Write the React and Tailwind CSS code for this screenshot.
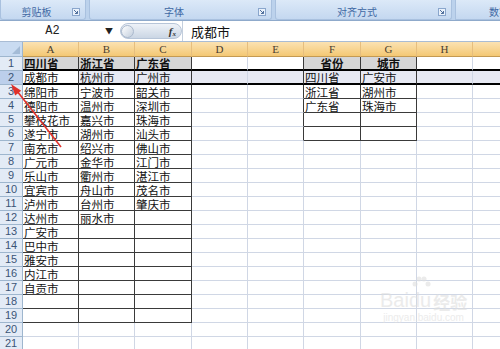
import React from 'react';

const COLS = [
  { key: 'A', w: 'w-[56px]' },
  { key: 'B', w: 'w-[56px]' },
  { key: 'C', w: 'w-[57px]' },
  { key: 'D', w: 'w-[56px]' },
  { key: 'E', w: 'w-[56px]' },
  { key: 'F', w: 'w-[57px]' },
  { key: 'G', w: 'w-[56px]' },
  { key: 'H', w: 'w-[56px]' },
  { key: '', w: 'w-[40px]' },
];

const colA = ['四川省', '成都市', '绵阳市', '德阳市', '攀枝花市', '遂宁市', '南充市', '广元市', '乐山市', '宜宾市', '泸州市', '达州市', '广安市', '巴中市', '雅安市', '内江市', '自贡市'];
const colB = ['浙江省', '杭州市', '宁波市', '温州市', '嘉兴市', '湖州市', '绍兴市', '金华市', '衢州市', '舟山市', '台州市', '丽水市'];
const colC = ['广东省', '广州市', '韶关市', '深圳市', '珠海市', '汕头市', '佛山市', '江门市', '湛江市', '茂名市', '肇庆市'];
const colF = ['省份', '四川省', '浙江省', '广东省'];
const colG = ['城市', '广安市', '湖州市', '珠海市'];

const ROWS = Array.from({ length: 21 }, (_, i) => [
  colA[i] || '',
  colB[i] || '',
  colC[i] || '',
  '',
  '',
  colF[i] || '',
  colG[i] || '',
  '',
  '',
]);

// bordered ranges: A1:C19 and F1:G6
const inTable = (r, c) => (c <= 2 && r <= 19) || ((c === 5 || c === 6) && r <= 6);

function Launcher() {
  return (
    <svg width="8" height="8" viewBox="0 0 8 8" className="mr-[5px] shrink-0">
      <rect x="0.5" y="0.5" width="7" height="7" fill="#e9f1fb" stroke="#8aa6cc" />
      <path d="M2 2 L5.5 5.5 M5.5 3 V5.5 H3" stroke="#4f6f9c" strokeWidth="1" fill="none" />
    </svg>
  );
}

function Group({ w, label }) {
  return (
    <div className={`${w} shrink-0 flex items-center pt-[4px] h-[20px] bg-gradient-to-b from-[#dce9f8] to-[#c4d8f0] border-x border-b border-[#a9c1df] rounded-b-[3px]`}>
      <span className="flex-1 text-center text-[10px] leading-none text-[#3f68a3]">{label}</span>
      <Launcher />
    </div>
  );
}

function Cell({ r, c, value, col }) {
  const dark = inTable(r, c);
  const rightDark = dark || inTable(r, c + 1);
  const bottomDark = dark || inTable(r + 1, c);
  const thick = r === 1 || r === 2;
  let bg = 'bg-white';
  if (r === 1 && dark) bg = 'bg-[#d6d6d6]';
  else if (r === 2 && c !== 0) bg = 'bg-[#e7e9f3]';
  const center = r === 1 && (c === 5 || c === 6);
  return (
    <div
      className={`${col.w} shrink-0 h-[14px] flex items-center whitespace-nowrap border-r ${
        rightDark ? 'border-r-[#3a3a3a]' : 'border-r-[#d0d7e5]'
      } ${thick ? 'border-b-2 border-b-black' : bottomDark ? 'border-b border-b-[#3a3a3a]' : 'border-b border-b-[#d0d7e5]'} ${bg} ${
        center ? 'justify-center' : 'pl-[1px]'
      } ${r === 1 ? 'font-bold' : ''} text-[11.5px] leading-[12px] text-[#111]`}
    >
      {value}
    </div>
  );
}

export default function App() {
  return (
    <div className="relative w-[500px] h-[349px] overflow-hidden bg-white font-['Noto_Sans_CJK_SC','Liberation_Sans',sans-serif]">
      {/* ribbon group labels */}
      <div className="flex h-[21px] gap-[3px] bg-[#bcd2ec] border-b border-[#8faacb]">
        <Group w="w-[86px]" label="剪贴板" />
        <Group w="w-[183px]" label="字体" />
        <Group w="w-[177px]" label="对齐方式" />
        <div className="flex-1 flex items-center pt-[4px] h-[20px] bg-gradient-to-b from-[#dce9f8] to-[#c4d8f0] border-l border-b border-[#a9c1df] pl-[33px] overflow-hidden">
          <span className="text-[10px] leading-none text-[#3f68a3] whitespace-nowrap">数字</span>
        </div>
      </div>

      {/* formula bar */}
      <div className="flex items-center h-[20px] bg-white">
        <div className="w-[120px] flex items-center shrink-0">
          <span className="w-[105px] text-center text-[12px] leading-none text-[#222] font-['Liberation_Mono',monospace]">A2</span>
          <span className="text-[8px] text-[#222]">▼</span>
        </div>
        <div className="w-[62px] h-[16px] shrink-0 flex items-center justify-between rounded-full bg-gradient-to-b from-[#eef2f8] to-[#cbd6e4] border border-[#b7c5d8] pr-[5px]">
          <span className="w-[13px] h-[13px] rounded-full bg-gradient-to-br from-white to-[#c2cedd] border border-[#aab9cd]" />
          <span className="font-['Liberation_Serif',serif] italic font-bold text-[11px] leading-none text-[#333]">
            f<sub className="text-[7px]">x</sub>
          </span>
        </div>
        <div className="flex-1 h-[20px] flex items-center pl-[8px] border-l border-[#c4cfdd] text-[13px] leading-none text-[#111]">成都市</div>
      </div>
      <div className="h-[1px] bg-[#a9bcd4]" />

      {/* column headers */}
      <div className="flex h-[15px]">
        <div className="w-[23px] shrink-0 h-[15px] bg-[#c9dbf1] border-r border-b border-[#9eb6ce] flex items-end justify-end p-[2px]">
          <svg width="8" height="8" viewBox="0 0 8 8">
            <path d="M8 0 V8 H0 Z" fill="#a4bbd6" />
          </svg>
        </div>
        {COLS.map((col) => (
          <div
            key={col.key + col.w}
            className={`${col.w} shrink-0 h-[15px] flex items-center justify-center bg-gradient-to-b from-[#fbe2b2] to-[#f4c873] border-r border-r-[#e6be7e] border-b border-b-[#c49a52] font-['Liberation_Serif',serif] text-[11px] leading-none text-[#4a4030]`}
          >
            {col.key}
          </div>
        ))}
      </div>

      {/* rows */}
      {ROWS.map((row, i) => {
        const r = i + 1;
        return (
          <div key={r} className="flex h-[14px]">
            <div
              className={`w-[23px] shrink-0 h-[14px] flex items-center justify-center border-r border-b border-[#9eb6ce] text-[11px] leading-none text-[#3b5576] font-['Liberation_Sans',sans-serif] ${
                r === 2 ? 'bg-[#bccfeb]' : 'bg-[#e3ebf6]'
              }`}
            >
              {r}
            </div>
            {row.map((v, c) => (
              <Cell key={c} r={r} c={c} value={v} col={COLS[c]} />
            ))}
          </div>
        );
      })}

      {/* red annotation arrow */}
      <svg className="absolute left-0 top-0 pointer-events-none" width="500" height="349">
        <line x1="17" y1="91" x2="61" y2="147" stroke="#e0322c" strokeWidth="1.6" />
        <polygon points="11,84 15.2,95.4 21.2,90.7" fill="#e0322c" />
      </svg>

      {/* watermark */}
      <div className="absolute left-[380px] top-[290px] flex flex-col items-center opacity-60 pointer-events-none">
        <div className="flex items-end text-[20px] leading-none font-['Liberation_Sans',sans-serif] text-[#dedede]">
          <span>Bai</span>
          <span className="relative">
            du
            <svg className="absolute left-[2px] -top-[14px]" width="20" height="14" viewBox="0 0 20 14">
              <circle cx="4" cy="8" r="2.5" fill="#dedede" />
              <circle cx="8" cy="3" r="2.5" fill="#dedede" />
              <circle cx="13" cy="3" r="2.5" fill="#dedede" />
              <circle cx="17" cy="8" r="2.5" fill="#dedede" />
            </svg>
          </span>
          <span className="ml-[2px] text-[17px] font-['Noto_Sans_CJK_SC',sans-serif] font-bold">经验</span>
        </div>
        <span className="mt-[3px] text-[10px] leading-none text-[#e0e0e0] font-['Liberation_Sans',sans-serif]">jingyan.baidu.com</span>
      </div>
    </div>
  );
}
